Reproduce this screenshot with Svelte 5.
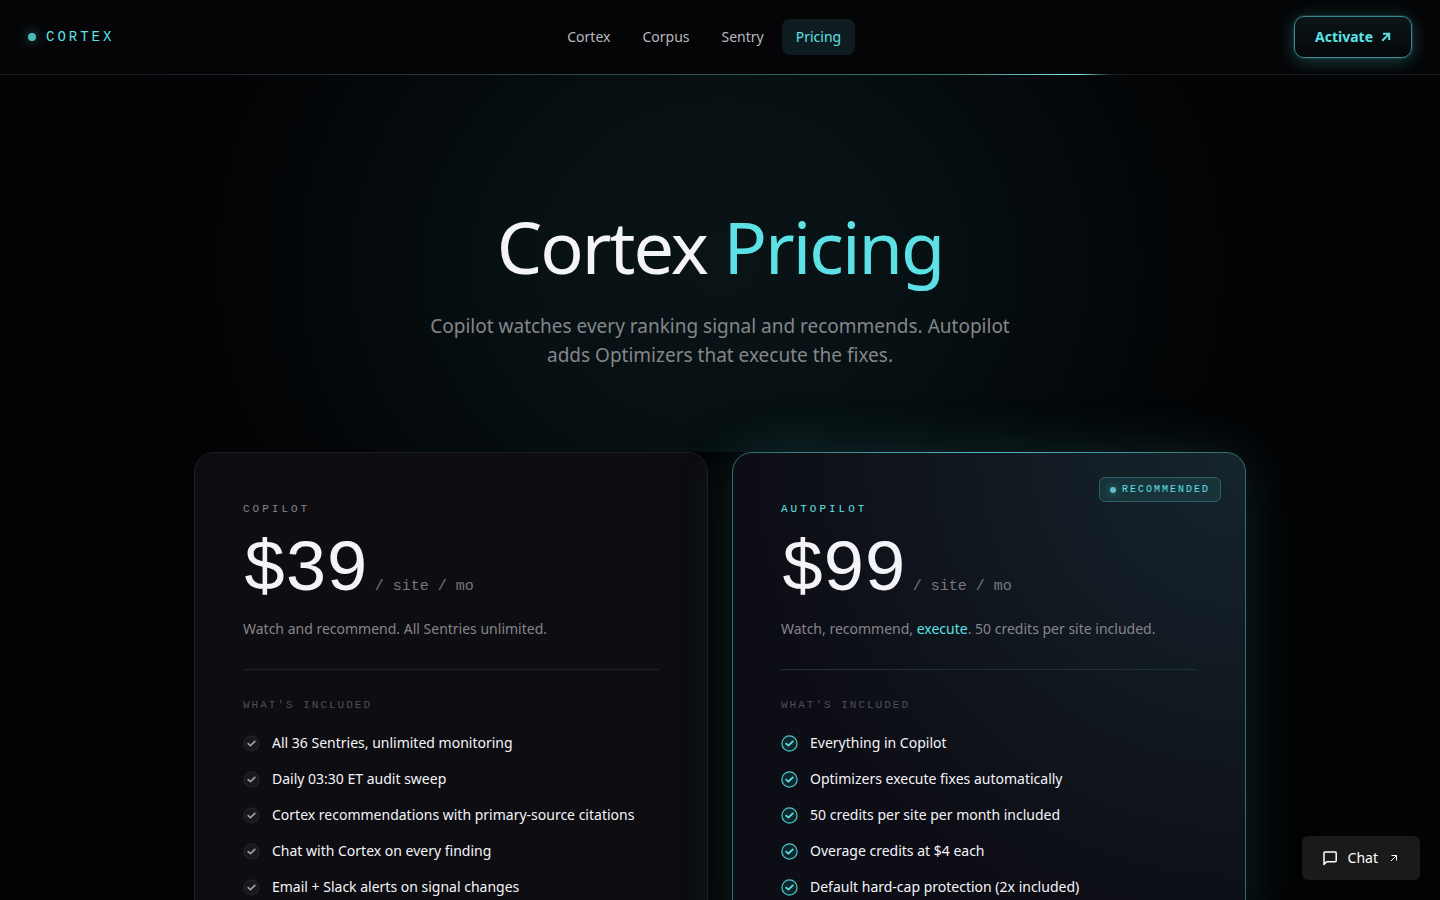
<script>
  const links = [
    { label: 'Cortex' },
    { label: 'Corpus' },
    { label: 'Sentry' },
    { label: 'Pricing', active: true }
  ];

  const plans = [
    {
      name: 'Copilot',
      price: '$39',
      before: 'Watch and recommend. All Sentries unlimited.',
      features: [
        'All 36 Sentries, unlimited monitoring',
        'Daily 03:30 ET audit sweep',
        'Cortex recommendations with primary-source citations',
        'Chat with Cortex on every finding',
        'Email + Slack alerts on signal changes'
      ]
    },
    {
      name: 'Autopilot',
      price: '$99',
      before: 'Watch, recommend, ',
      strong: 'execute',
      after: '. 50 credits per site included.',
      featured: true,
      features: [
        'Everything in Copilot',
        'Optimizers execute fixes automatically',
        '50 credits per site per month included',
        'Overage credits at $4 each',
        'Default hard-cap protection (2x included)'
      ]
    }
  ];
</script>

<header>
  <a class="brand" href="#top"><span class="dot"></span>CORTEX</a>
  <nav aria-label="Main">
    {#each links as link}
      <a href="#{link.label.toLowerCase()}" class:active={link.active}>{link.label}</a>
    {/each}
  </nav>
  <a class="activate" href="#activate">
    Activate
    <svg width="10" height="10" viewBox="0 0 10 10" fill="none" stroke="currentColor" stroke-width="2" aria-hidden="true">
      <path d="M1.2 8.8 7.6 2.4M2 1.8h6.2V8" />
    </svg>
  </a>
</header>

<main id="top">
  <section class="hero">
    <h1>Cortex <span>Pricing</span></h1>
    <p>Copilot watches every ranking signal and recommends. Autopilot adds Optimizers that execute the fixes.</p>
  </section>

  <section class="plans">
    {#each plans as plan}
      <article class="card" class:featured={plan.featured}>
        {#if plan.featured}
          <span class="badge"><span class="badge-dot"></span>RECOMMENDED</span>
        {/if}
        <h2>{plan.name}</h2>
        <div class="price"><span class="amount">{plan.price}</span><span class="unit">/ site / mo</span></div>
        <p class="summary">{plan.before}{#if plan.strong}<em>{plan.strong}</em>{plan.after}{/if}</p>
        <h3>What's included</h3>
        <ul>
          {#each plan.features as feature}
            <li>
              <svg width="17" height="17" viewBox="0 0 17 17" fill="none" aria-hidden="true">
                <circle class="ring" cx="8.5" cy="8.5" r="7.6" />
                <path class="tick" d="M5.2 8.6 7.4 10.6 11.8 6.4" />
              </svg>
              {feature}
            </li>
          {/each}
        </ul>
      </article>
    {/each}
  </section>
</main>

<button class="chat" type="button">
  <svg width="16" height="16" viewBox="0 0 16 16" fill="none" stroke="currentColor" stroke-width="1.5" stroke-linejoin="round" aria-hidden="true">
    <path d="M3 2h10.2a1 1 0 0 1 1 1v7.8a1 1 0 0 1-1 1H4.6L2 14.4V3a1 1 0 0 1 1-1Z" />
  </svg>
  Chat
  <svg class="out" width="8" height="8" viewBox="0 0 8 8" fill="none" stroke="currentColor" stroke-width="1" aria-hidden="true">
    <path d="M1 7 7 1M1.5 1.5h5v5" />
  </svg>
</button>

<style>
  :global(body) {
    margin: 0;
    background: #030305;
    color: #f4f4f8;
    font-family: 'Noto Sans', sans-serif;
  }

  a {
    color: inherit;
    text-decoration: none;
  }

  header {
    position: relative;
    display: flex;
    align-items: center;
    justify-content: space-between;
    box-sizing: border-box;
    height: 75px;
    padding: 0 28px;
    border-bottom: 1px solid #1b1b1e;
    background: #050507;
  }

  header::after {
    content: '';
    position: absolute;
    left: 0;
    bottom: -1px;
    width: 78%;
    height: 1px;
    background: linear-gradient(90deg, transparent 10%, #2d4f50 60%, #38787b 85%, #7ff0f2 96%, transparent 99%);
  }

  .brand {
    display: flex;
    align-items: center;
    gap: 10px;
    color: #5ce1e6;
    font: 14px/20px 'Liberation Mono', monospace;
    letter-spacing: 3px;
  }

  .dot {
    width: 8px;
    height: 8px;
    border-radius: 50%;
    background: #4ab9bc;
    box-shadow: 0 0 12px rgba(92, 225, 230, 0.5);
  }

  nav {
    display: flex;
    gap: 4px;
  }

  nav a {
    padding: 8px 14px;
    border-radius: 8px;
    color: #b9b9bd;
    font-size: 14px;
    line-height: 20px;
  }

  nav a.active {
    background: #0e1c20;
    color: #5ce1e6;
  }

  .activate {
    display: flex;
    align-items: center;
    gap: 8px;
    padding: 10px 20px;
    border: 1px solid #37898c;
    border-radius: 10px;
    background: linear-gradient(#0b1518, #050709);
    box-shadow: 0 0 0 1px rgba(92, 225, 230, 0.12), 0 0 20px rgba(92, 225, 230, 0.1), 0 4px 18px rgba(92, 225, 230, 0.2);
    color: #5ce1e6;
    font-size: 14px;
    font-weight: 700;
    line-height: 20px;
  }

  main {
    overflow: hidden;
  }

  .hero {
    padding: 122px 24px 82px;
    background: radial-gradient(ellipse 520px 460px at 50% 50%, #0a1416 0%, #071012 40%, #04080a 75%, #030305 100%);
    text-align: center;
  }

  h1 {
    margin: 0;
    font-size: 72px;
    font-weight: 400;
    line-height: 98px;
    letter-spacing: -2px;
  }

  h1 span {
    color: #5ce1e6;
  }

  .hero p {
    max-width: 600px;
    margin: 17px auto 0;
    color: #85868b;
    font-size: 19px;
    line-height: 29px;
  }

  .plans {
    display: grid;
    grid-template-columns: 1fr 1fr;
    gap: 24px;
    max-width: 1052px;
    margin: 0 auto;
    padding: 0 24px 80px;
  }

  .card {
    position: relative;
    padding: 48px;
    border: 1px solid #1d1d22;
    border-radius: 20px;
    background: #0d0d12;
  }

  .card.featured {
    border-color: #2f6f72;
    background:
      radial-gradient(circle at 100% 0%, rgba(92, 225, 230, 0.11), rgba(92, 225, 230, 0) 70%),
      #0d0d15;
    box-shadow: 0 0 60px rgba(92, 225, 230, 0.15), 0 20px 60px rgba(0, 0, 0, 0.6);
  }

  .card.featured::before {
    content: '';
    position: absolute;
    top: -1px;
    left: 20px;
    right: 20px;
    height: 1px;
    background: linear-gradient(90deg, transparent, #5ce1e6, transparent);
    opacity: 0.7;
  }

  .badge {
    position: absolute;
    top: 24px;
    right: 24px;
    display: flex;
    align-items: center;
    gap: 6px;
    padding: 4px 10px;
    border: 1px solid #2c6266;
    border-radius: 6px;
    background: #18333a;
    color: #5ce1e6;
    font: 10px/15px 'Liberation Mono', monospace;
    letter-spacing: 2px;
  }

  .badge-dot {
    width: 6px;
    height: 6px;
    border-radius: 50%;
    background: #5cc1cb;
    box-shadow: 0 0 8px rgba(92, 225, 230, 0.6);
  }

  h2,
  h3 {
    margin: 0;
    font: 11px/16px 'Liberation Mono', monospace;
    text-transform: uppercase;
  }

  h2 {
    color: #85858a;
    letter-spacing: 3px;
  }

  .featured h2 {
    color: #5ce1e6;
  }

  .price {
    display: flex;
    align-items: baseline;
    gap: 8px;
    margin-top: 18px;
    font-family: 'Liberation Mono', monospace;
  }

  .amount {
    font-size: 72px;
    line-height: 72px;
    letter-spacing: -2px;
  }

  .unit {
    color: #77777c;
    font-size: 15px;
    line-height: 24px;
  }

  .summary {
    margin: 10px 0 0;
    padding-bottom: 28px;
    border-bottom: 1px solid #212126;
    color: #85858a;
    font-size: 14px;
    line-height: 24px;
  }

  .featured .summary {
    border-color: #1b3238;
  }

  .summary em {
    color: #5ce1e6;
    font-style: normal;
  }

  h3 {
    margin-top: 27px;
    color: #505056;
    letter-spacing: 2px;
  }

  ul {
    display: flex;
    flex-direction: column;
    gap: 12px;
    margin: 18px 0 0;
    padding: 0;
    list-style: none;
  }

  li {
    display: flex;
    align-items: center;
    gap: 12px;
    font-size: 14px;
    line-height: 24px;
  }

  .ring {
    fill: #18181d;
    stroke: #28282d;
    stroke-width: 1;
  }

  .tick {
    stroke: #9a9a9f;
    stroke-width: 1.8;
    stroke-linecap: round;
    stroke-linejoin: round;
  }

  .featured .ring {
    fill: #0e272c;
    stroke: #50c5ca;
    stroke-width: 1.2;
  }

  .featured .tick {
    stroke: #5ce1e6;
  }

  .chat {
    position: fixed;
    right: 20px;
    bottom: 20px;
    display: flex;
    align-items: center;
    gap: 10px;
    padding: 12px 22px 12px 20px;
    border: 0;
    border-radius: 6px;
    background: #1a1a1a;
    color: #fff;
    font: 14px/20px 'Noto Sans', sans-serif;
  }

  .out {
    margin-left: 2px;
  }
</style>
